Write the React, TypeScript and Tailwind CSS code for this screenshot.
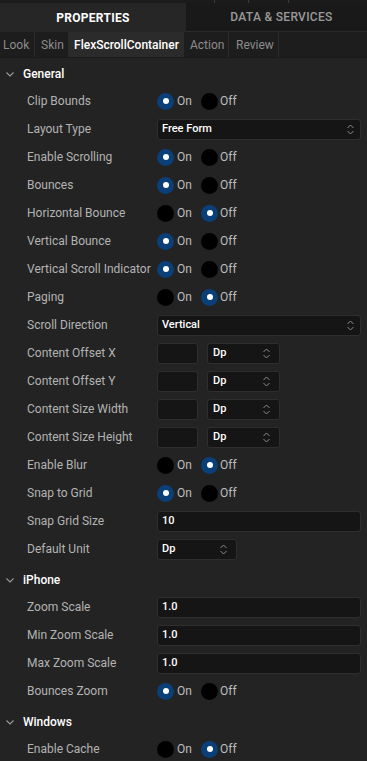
import React from "react";

type Row =
  | { label: string; kind: "radio"; on: boolean }
  | { label: string; kind: "select"; value: string }
  | { label: string; kind: "text"; value: string }
  | { label: string; kind: "unit" }
  | { label: string; kind: "small"; value: string };

const sections: { title: string; rows: Row[] }[] = [
  {
    title: "General",
    rows: [
      { label: "Clip Bounds", kind: "radio", on: true },
      { label: "Layout Type", kind: "select", value: "Free Form" },
      { label: "Enable Scrolling", kind: "radio", on: true },
      { label: "Bounces", kind: "radio", on: true },
      { label: "Horizontal Bounce", kind: "radio", on: false },
      { label: "Vertical Bounce", kind: "radio", on: true },
      { label: "Vertical Scroll Indicator", kind: "radio", on: true },
      { label: "Paging", kind: "radio", on: false },
      { label: "Scroll Direction", kind: "select", value: "Vertical" },
      { label: "Content Offset X", kind: "unit" },
      { label: "Content Offset Y", kind: "unit" },
      { label: "Content Size Width", kind: "unit" },
      { label: "Content Size Height", kind: "unit" },
      { label: "Enable Blur", kind: "radio", on: false },
      { label: "Snap to Grid", kind: "radio", on: true },
      { label: "Snap Grid Size", kind: "text", value: "10" },
      { label: "Default Unit", kind: "small", value: "Dp" },
    ],
  },
  {
    title: "iPhone",
    rows: [
      { label: "Zoom Scale", kind: "text", value: "1.0" },
      { label: "Min Zoom Scale", kind: "text", value: "1.0" },
      { label: "Max Zoom Scale", kind: "text", value: "1.0" },
      { label: "Bounces Zoom", kind: "radio", on: true },
    ],
  },
  {
    title: "Windows",
    rows: [{ label: "Enable Cache", kind: "radio", on: false }],
  },
];

const Updown = () => (
  <svg width="9" height="13" viewBox="0 0 9 13" fill="none" stroke="#8a8a8a" strokeWidth="1">
    <polyline points="1.5,5 4.5,2 7.5,5" />
    <polyline points="1.5,8 4.5,11 7.5,8" />
  </svg>
);

const Dot = ({ checked }: { checked: boolean }) => (
  <span
    className={`w-[17px] h-[17px] rounded-full flex items-center justify-center ${checked ? "bg-[#0b3f78]" : "bg-black"}`}
  >
    {checked && <span className="w-[6px] h-[6px] rounded-full bg-white" />}
  </span>
);

const Field = ({ row }: { row: Row }) => {
  if (row.kind === "radio") {
    return (
      <div className="flex items-center text-[12px] text-[#bdbdbd]">
        <Dot checked={row.on} />
        <span className="ml-[3px] w-[24px]">On</span>
        <Dot checked={!row.on} />
        <span className="ml-[2px]">Off</span>
      </div>
    );
  }
  if (row.kind === "select" || row.kind === "text") {
    return (
      <div className="flex-1 h-[21px] rounded-[3px] border border-[#2e2e2e] bg-[#151515] flex items-center justify-between pl-[4px] pr-[5px] text-[11px] font-medium text-white">
        <span>{row.value}</span>
        {row.kind === "select" && <Updown />}
      </div>
    );
  }
  if (row.kind === "small") {
    return (
      <div className="w-[80px] h-[21px] rounded-[3px] border border-[#2e2e2e] bg-[#151515] flex items-center justify-between pl-[4px] pr-[8px] text-[11px] font-medium text-white">
        <span>{row.value}</span>
        <Updown />
      </div>
    );
  }
  return (
    <div className="flex items-center gap-[9px]">
      <div className="w-[41px] h-[21px] rounded-[3px] border border-[#2e2e2e] bg-[#151515]" />
      <div className="w-[73px] h-[21px] rounded-[3px] border border-[#2e2e2e] bg-[#151515] flex items-center justify-between pl-[5px] pr-[8px] text-[11px] font-medium text-white">
        <span>Dp</span>
        <Updown />
      </div>
    </div>
  );
};

export default function App() {
  return (
    <div
      className="w-[367px] h-[761px] overflow-hidden bg-[#232323]"
      style={{ fontFamily: "Roboto, 'Liberation Sans', sans-serif" }}
    >
      {/* top strip */}
      <div className="h-[3px] bg-[#1b1b1b] flex">
        <div className="w-[215px] border-r border-[#3a3a3a]" />
        <div className="w-[34px] border-r border-[#3a3a3a]" />
        <div className="w-[40px] border-r border-[#3a3a3a]" />
      </div>

      {/* main tabs */}
      <div className="h-[29px] flex text-[12px] tracking-[0.3px]">
        <div className="w-[186px] bg-[#262626] flex items-center justify-center font-bold text-white">PROPERTIES</div>
        <div className="flex-1 bg-[#191919] flex items-center justify-center pl-[10px] font-medium text-[#9a9a9a] border-b border-[#2a2a2a]">
          DATA &amp; SERVICES
        </div>
      </div>

      {/* sub tabs */}
      <div className="h-[26px] flex bg-[#1d1d1d] text-[12px] text-[#8c8c8c] border-b border-[#1a1a1a]">
        <div className="px-[3px] w-[35px] flex items-center border-r border-[#2c2c2c]">Look</div>
        <div className="w-[34px] pl-[6px] flex items-center border-r border-[#2c2c2c]">Skin</div>
        <div className="w-[115px] bg-[#2b2b2b] flex items-center justify-center font-medium text-white">
          FlexScrollContainer
        </div>
        <div className="w-[45px] pl-[6px] flex items-center border-r border-[#2c2c2c]">Action</div>
        <div className="w-[50px] pl-[7px] flex items-center border-r border-[#2c2c2c]">Review</div>
      </div>

      {sections.map((s, i) => (
        <div key={s.title} className={i === 0 ? "pt-[3px]" : "pt-[4px]"}>
          <div className="h-[26px] flex items-center pl-[5px] gap-[8px]">
            <svg width="10" height="10" viewBox="0 0 10 10" fill="none" stroke="#9a9a9a" strokeWidth="1.1">
              <polyline points="1.5,3.5 5,7 8.5,3.5" />
            </svg>
            <span className="text-[12px] font-medium text-white">{s.title}</span>
          </div>
          {s.rows.map((r) => (
            <div key={r.label} className="h-[28px] flex items-center pr-[6px]">
              <div className="w-[157px] pl-[27px] text-[12px] text-[#b3b3b3] whitespace-nowrap">{r.label}</div>
              <div className="flex-1 flex">
                <Field row={r} />
              </div>
            </div>
          ))}
        </div>
      ))}
    </div>
  );
}
